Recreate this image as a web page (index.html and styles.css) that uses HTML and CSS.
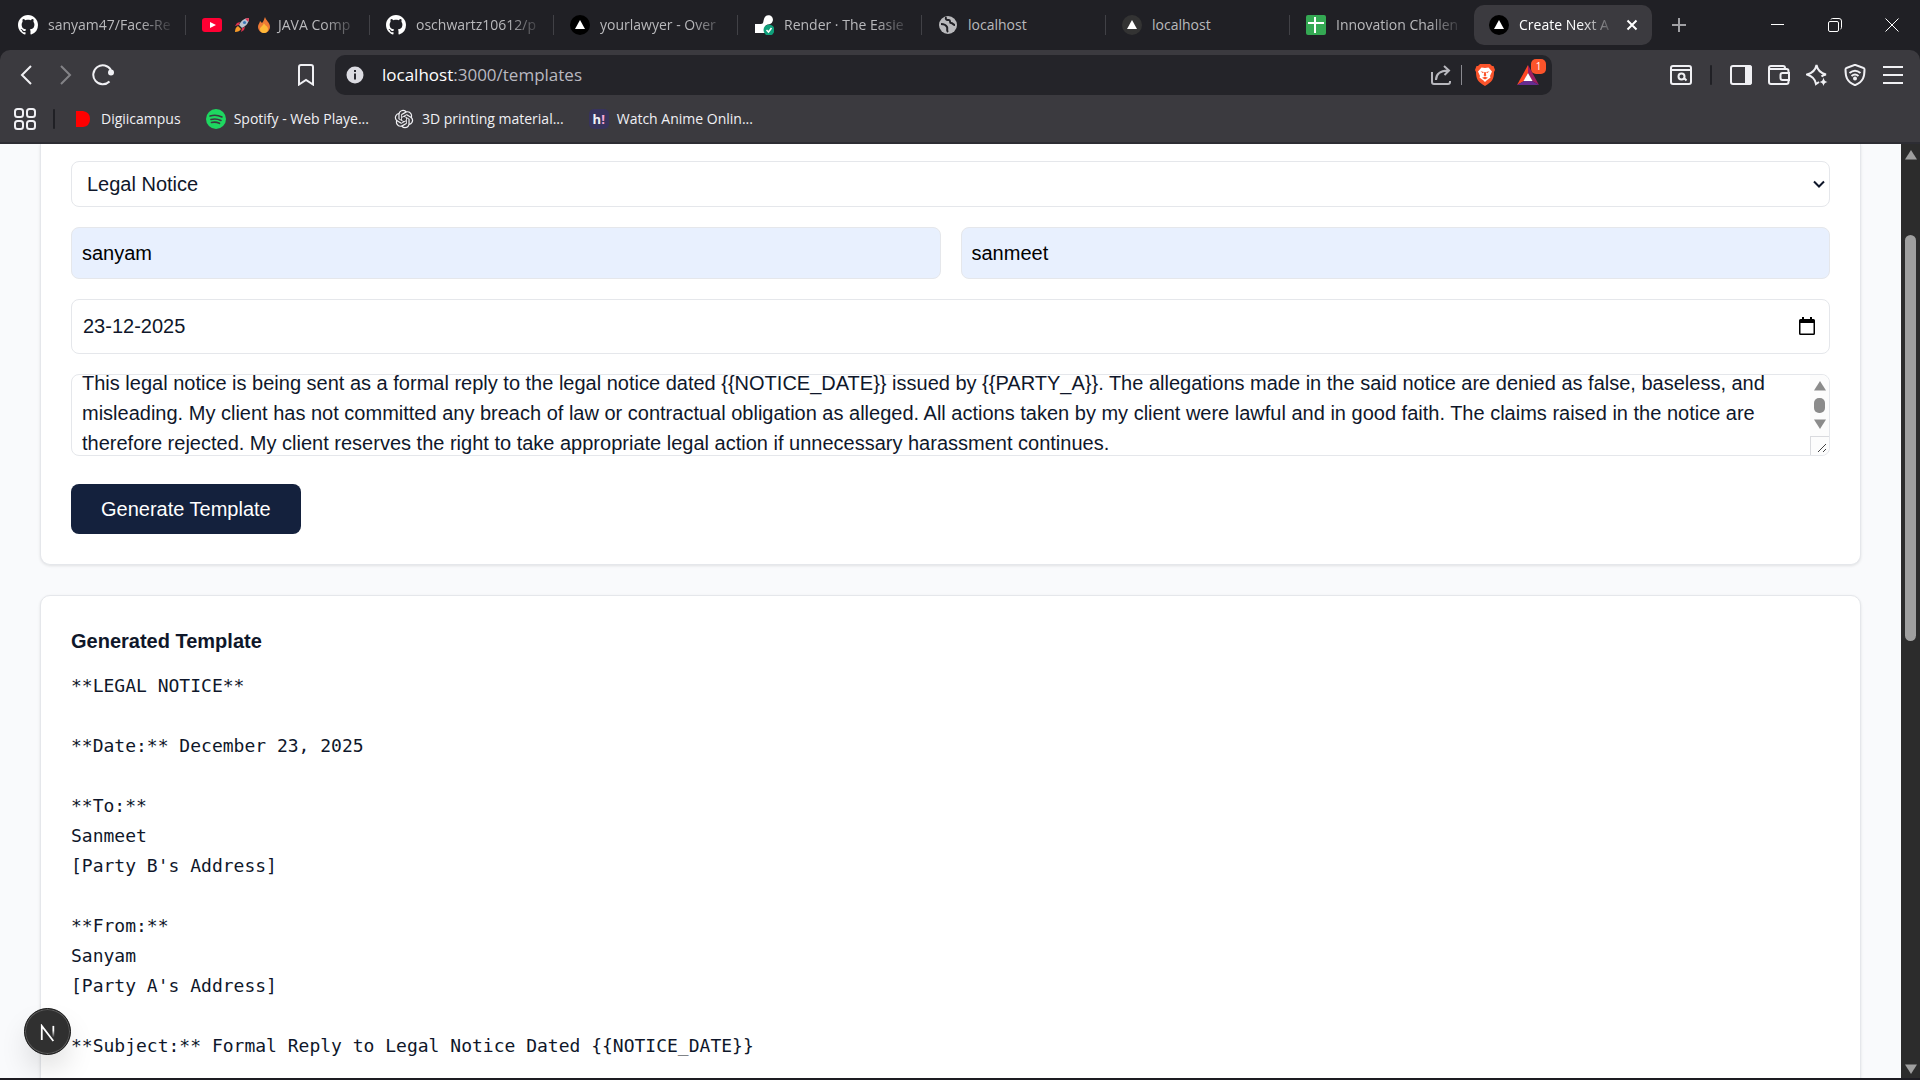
FILE: index.html
```html
<!DOCTYPE html>
<html lang="en">
<head>
<meta charset="utf-8">
<meta name="viewport" content="width=device-width, initial-scale=1">
<title>Create Next App</title>
<link rel="stylesheet" href="styles.css">
</head>
<body>
<svg class="defs" aria-hidden="true">
  <symbol id="github" viewBox="0 0 16 16"><path fill="#fff" d="M8 0C3.58 0 0 3.58 0 8c0 3.54 2.29 6.53 5.47 7.59.4.07.55-.17.55-.38 0-.19-.01-.82-.01-1.49-2.01.37-2.53-.49-2.69-.94-.09-.23-.48-.94-.82-1.13-.28-.15-.68-.52-.01-.53.63-.01 1.08.58 1.23.82.72 1.21 1.87.87 2.33.66.07-.52.28-.87.51-1.07-1.78-.2-3.64-.89-3.64-3.95 0-.87.31-1.59.82-2.15-.08-.2-.36-1.02.08-2.12 0 0 .67-.21 2.2.82.64-.18 1.32-.27 2-.27s1.36.09 2 .27c1.53-1.04 2.2-.82 2.2-.82.44 1.1.16 1.92.08 2.12.51.56.82 1.27.82 2.15 0 3.07-1.87 3.75-3.65 3.95.29.25.54.73.54 1.48 0 1.07-.01 1.93-.01 2.2 0 .21.15.46.55.38A8.01 8.01 0 0 0 16 8c0-4.42-3.58-8-8-8z"/></symbol>
  <symbol id="vercel" viewBox="0 0 20 20"><circle cx="10" cy="10" r="10"/><path fill="#fff" d="M10 5l5 9H5z"/></symbol>
</svg>
<div class="window">
  <header class="chrome">
    <div class="tabstrip">
      <nav class="tabs" aria-label="Tabs">
        <a class="tab" href="#"><svg class="favicon"><use href="#github"/></svg><span class="tab-title fade">sanyam47/Face-Re</span></a>
        <a class="tab" href="#"><svg class="favicon" viewBox="0 0 20 20"><rect y="3" width="20" height="14" rx="3" fill="#ff0033"/><path fill="#fff" d="M8 7l6 3-6 3z"/></svg><span class="tab-title fade"><svg class="emoji" viewBox="0 0 16 16"><path fill="#b9c3cf" d="M15 1c-5 0-8 3-10 7l3 3c4-2 7-5 7-10z"/><path fill="#e0314f" d="M15 1l-4 .7 3.300 3.300zM6 5L3 6 1 9l4-1zM11 10l-1 3-3 2 1-4z"/><circle cx="10.500" cy="5.500" r="1.600" fill="#3c78b8"/><path fill="#f89b28" d="M4 9c-2 1-3 3-3 6 3 0 5-1 6-3z"/></svg><svg class="emoji" viewBox="0 0 16 16"><path fill="#ee7a35" d="M9 0c1 4 5 5 5 10a6 6 0 0 1-12 0c0-3 2-4 2-6l2 2c2-2 2-4 3-6z"/><path fill="#ffb938" d="M8 6c0 2 4 3 4 6a4 4 0 0 1-8 0c0-2 3-3 4-6z"/></svg>JAVA Comp</span></a>
        <a class="tab" href="#"><svg class="favicon"><use href="#github"/></svg><span class="tab-title fade">oschwartz10612/p</span></a>
        <a class="tab" href="#"><svg class="favicon"><use href="#vercel"/></svg><span class="tab-title fade">yourlawyer - Over</span></a>
        <a class="tab" href="#"><svg class="favicon" viewBox="0 0 20 20"><path fill="#fff" d="M1 9h6c3 0 2-3 3-5a4.500 4.500 0 1 1 6 5c-2 1-4 0-5 3v6H1z"/><circle cx="15" cy="15" r="5.500" fill="#0f9f7a"/><path d="M12.500 15l2 2 3-4" fill="none" stroke="#fff" stroke-width="1.500"/></svg><span class="tab-title fade">Render · The Easie</span></a>
        <a class="tab" href="#"><svg class="favicon" viewBox="0 0 20 20"><circle cx="10" cy="10" r="9" fill="#b9b9bc"/><path d="M3 9c3 0 5 1 6 3s-1 3 1 5M8 2c-1 3 1 3 3 3s0 3 2 3 2 2 4 2" fill="none" stroke="#202025" stroke-width="2"/></svg><span class="tab-title">localhost</span></a>
        <a class="tab" href="#"><svg class="favicon favicon-soft"><use href="#vercel"/></svg><span class="tab-title">localhost</span></a>
        <a class="tab" href="#"><svg class="favicon" viewBox="0 0 20 20"><rect width="20" height="20" rx="2" fill="#34a853"/><path fill="#fff" d="M8 2h2v5h8v2h-8v9H8V9H2V7h6z"/></svg><span class="tab-title fade">Innovation Challen</span></a>
        <a class="tab tab-active" href="#" aria-current="page"><svg class="favicon"><use href="#vercel"/></svg><span class="tab-title fade">Create Next A</span><svg class="tab-close" viewBox="0 0 12 12"><path d="M1.500 1.500l9 9M10.500 1.500l-9 9"/></svg></a>
      </nav>
      <button class="new-tab" aria-label="New tab"><svg viewBox="0 0 14 14"><path d="M7 0v14M0 7h14"/></svg></button>
      <div class="window-controls">
        <button aria-label="Minimize"><svg viewBox="0 0 14 14"><path d="M0 6.500h13"/></svg></button>
        <button aria-label="Restore"><svg viewBox="0 0 14 14"><rect x=".5" y="3.500" width="10" height="10" rx="1.500"/><path d="M3 1.500q.3-1 1.500-1H11q2.500 0 2.500 2.500v6.500q0 1.200-1 1.500"/></svg></button>
        <button aria-label="Close"><svg viewBox="0 0 14 14"><path d="M.5.5l13 13M13.500.5l-13 13"/></svg></button>
      </div>
    </div>

    <div class="toolbar">
      <div class="nav-buttons">
        <button aria-label="Back"><svg viewBox="0 0 22 22"><path d="M15 2l-9 9 9 9"/></svg></button>
        <button class="dim" aria-label="Forward"><svg viewBox="0 0 22 22"><path d="M7 2l9 9-9 9"/></svg></button>
        <button aria-label="Reload"><svg viewBox="0 0 22 22"><path d="M17.500 17.500A9.500 9.500 0 1 1 19 6"/><circle cx="19" cy="8.500" r="2" fill="#f0f0f4"/></svg></button>
        <button class="bookmark-page" aria-label="Bookmark this page"><svg viewBox="0 0 22 22"><path d="M4 20.500V3q0-2 2-2h10q2 0 2 2v17.500L11 16z"/></svg></button>
      </div>
      <div class="address">
        <svg class="info" viewBox="0 0 18 18"><circle cx="9" cy="9" r="8.500" fill="#dcdce2"/><path fill="#2a2a30" d="M8 4h2v2H8zM8 7.500h2v6H8z"/></svg>
        <a class="url" href="#"><span class="host">localhost</span>:3000/templates</a>
        <div class="address-actions">
          <button aria-label="Share"><svg viewBox="0 0 22 22"><path class="muted" d="M2 8v10q0 2 2 2h14q2 0 2-2v-1M6 16q0-9 12-9.500M14 2l5 4.500-4.500 4.500"/></svg></button>
          <span class="address-rule"></span>
          <button aria-label="Brave Shields"><svg viewBox="0 0 20 22"><path fill="#fb542b" stroke="none" d="M5 0h10l2 2h1.500l1.500 4-1 2c0 7-2 10-9 14C3 18 1 15 1 8L0 6l1.500-4H3z"/><path fill="#fff" stroke="none" d="M6.500 3.500L10 4l3.500-.5L17 7.500l-2 4.500.5 1.500-4 3L10 18l-1.500-1.500-4-3L5 12 3 7.500z"/><path fill="#fb542b" stroke="none" d="M5.500 7.300l3.300.7-.8 1.300zM14.500 7.300l-3.300.7.8 1.300zM9.300 8h1.400l.6 3.500L10 12.500l-1.300-1zM7 13.800l3-1 3 1-3 1.700z"/></svg></button>
          <button class="rewards" aria-label="Brave Rewards"><svg viewBox="0 0 22 20"><path fill="#ff4724" stroke="none" d="M11 0L0 20l7-4 4-8z"/><path fill="#9e1f63" stroke="none" d="M11 0l11 20-7-4-4-8z"/><path fill="#662d91" stroke="none" d="M0 20h22l-7-4H7z"/><path fill="#fff" stroke="none" d="M11 8l4.500 8h-9z"/></svg><span class="rewards-count">1</span></button>
        </div>
      </div>
      <div class="tools">
        <button aria-label="Search page"><svg viewBox="0 0 22 22"><rect x="1" y="2" width="20" height="18" rx="2"/><path d="M1 6h20M14 14l2.500 2.500"/><circle cx="11.500" cy="12.500" r="3"/></svg></button>
        <span class="rule"></span>
        <button aria-label="Sidebar"><svg viewBox="0 0 22 22"><rect x="1" y="2" width="20" height="18" rx="2"/><path fill="#f0f0f4" d="M16 2h3q2 0 2 2v14q0 2-2 2h-3z"/></svg></button>
        <button aria-label="Wallet"><svg viewBox="0 0 22 22"><path d="M20.500 9V7q0-2-2-2H1.500M17 5V4q0-2-2-2H3Q1 2 1 4v14q0 2 2 2h15.500q2 0 2-2v-2M21 9h-6.500q-2 0-2 2v3q0 2 2 2H21z"/></svg></button>
        <button aria-label="Leo AI"><svg viewBox="0 0 22 22"><path d="M13 18l-3 2q-1-7-9-9.500Q9 8.500 10.500 1 12 8.500 20 10.500q-3 .5-4.500 2"/><path fill="#f0f0f4" stroke="none" d="M17.500 13.500q.7 4 4 4.500-3.300.5-4 4-.7-3.500-4-4 3.300-.5 4-4.500z"/></svg></button>
        <button aria-label="VPN"><svg viewBox="0 0 22 22"><path d="M11 0.800l8.500 3.200q1 0 1 1.500c0 7-1 12-9.500 15.700C2.500 17.500 1.500 12.500 1.500 5.500q0-1.500 1-1.500z"/><path d="M5.500 9q5.500-4.500 11 0M7.500 12q3.500-3 7 0"/><circle cx="11" cy="14.500" r="1" fill="#f0f0f4"/></svg></button>
        <button aria-label="Menu"><svg viewBox="0 0 22 22"><path d="M1 3h20M1 11h20M1 19h20"/></svg></button>
      </div>
    </div>

    <nav class="bookmarks" aria-label="Bookmarks">
      <button class="apps" aria-label="All bookmarks"><svg viewBox="0 0 22 22"><rect x="1" y="1" width="8" height="8" rx="2.500"/><rect x="13" y="1" width="8" height="8" rx="2.500"/><rect x="1" y="13" width="8" height="8" rx="2.500"/><rect x="13" y="13" width="8" height="8" rx="2.500"/></svg></button>
      <span class="rule"></span>
      <a class="bookmark" href="#"><svg class="favicon" viewBox="0 0 20 20"><path fill="#f00" d="M3 2h7q7 1 7 8t-7 8H3z"/></svg>Digiicampus</a>
      <a class="bookmark" href="#"><svg class="favicon" viewBox="0 0 20 20"><circle cx="10" cy="10" r="10" fill="#1ed760"/><path d="M4 7q6-2 12 1M5 10.500q5-1.500 10 1M5.500 13.500q4-1 8 .8" fill="none" stroke="#3b3a3f" stroke-width="1.600" stroke-linecap="round"/></svg>Spotify - Web Playe...</a>
      <a class="bookmark" href="#"><svg class="favicon" viewBox="-1 -1 26 26"><path fill="#f0f0f4" d="M22.280 9.820a5.980 5.980 0 0 0-.52-4.910 6.050 6.050 0 0 0-6.510-2.900A6.070 6.070 0 0 0 4.980 4.180a5.980 5.980 0 0 0-4 2.900 6.050 6.050 0 0 0 .74 7.100 5.980 5.980 0 0 0 .51 4.910 6.050 6.050 0 0 0 6.510 2.900A5.980 5.980 0 0 0 13.260 24a6.060 6.060 0 0 0 5.770-4.210 5.990 5.990 0 0 0 4-2.900 6.060 6.060 0 0 0-.75-7.070zM13.260 22.430a4.480 4.480 0 0 1-2.880-1.040l.14-.08 4.780-2.760a.8.8 0 0 0 .39-.68v-6.740l2.020 1.170a.07.07 0 0 1 .04.05v5.580a4.500 4.500 0 0 1-4.490 4.500zM3.600 18.300a4.470 4.470 0 0 1-.54-3.010l.14.09 4.780 2.760a.77.77 0 0 0 .78 0l5.840-3.370v2.330a.08.08 0 0 1-.03.06L9.740 19.950a4.500 4.500 0 0 1-6.140-1.650zM2.340 7.900a4.490 4.490 0 0 1 2.370-1.970v5.680a.77.77 0 0 0 .39.68l5.810 3.350-2.020 1.170a.08.08 0 0 1-.07 0L4 14.030A4.500 4.500 0 0 1 2.340 7.900zm16.600 3.860L13.100 8.360l2.020-1.160a.08.08 0 0 1 .07 0l4.830 2.790a4.490 4.490 0 0 1-.68 8.100v-5.680a.79.79 0 0 0-.4-.65zm2.010-3.020l-.14-.09-4.780-2.780a.78.78 0 0 0-.78 0L9.410 9.230V6.900a.07.07 0 0 1 .03-.06l4.830-2.790a4.500 4.500 0 0 1 6.680 4.690zM8.310 12.860l-2.020-1.160a.08.08 0 0 1-.04-.06V6.070a4.500 4.500 0 0 1 7.380-3.450l-.14.08L8.700 5.460a.8.8 0 0 0-.39.68zm1.090-2.360l2.600-1.500 2.610 1.500v3l-2.600 1.500-2.610-1.500z"/></svg>3D printing material...</a>
      <a class="bookmark" href="#"><span class="favicon anime">h<span class="anime-mark">!</span></span>Watch Anime Onlin...</a>
    </nav>
  </header>

  <div class="viewport">
    <main class="page">
      <form class="card card-form">
        <div class="select-wrap">
          <select class="field" aria-label="Template type"><option>Legal Notice</option></select>
          <svg class="chevron" viewBox="0 0 12 8"><path d="M1 1.500l5 5 5-5"/></svg>
        </div>
        <div class="parties">
          <input class="field filled" type="text" value="sanyam" aria-label="Party A">
          <input class="field filled" type="text" value="sanmeet" aria-label="Party B">
        </div>
        <div class="field date-field">
          <input class="date-input" type="text" value="23-12-2025" aria-label="Notice date">
          <button type="button" class="date-button" aria-label="Open calendar"><svg viewBox="0 0 16 18"><path d="M0 3.500Q0 2 1.500 2H3V0h2v2h6V0h2v2h1.500Q16 2 16 3.500v13q0 1.500-1.500 1.500h-13Q0 18 0 16.500zM1.500 6v10.500h13V6z"/></svg></button>
        </div>
        <div class="details">
          <textarea class="field details-text" id="details" aria-label="Details">This legal notice is being sent as a formal reply to the legal notice dated {{NOTICE_DATE}} issued by {{PARTY_A}}. The allegations made in the said notice are denied as false, baseless, and misleading. My client has not committed any breach of law or contractual obligation as alleged. All actions taken by my client were lawful and in good faith. The claims raised in the notice are therefore rejected. My client reserves the right to take appropriate legal action if unnecessary harassment continues.</textarea>
          <div class="details-scroll" aria-hidden="true">
            <svg class="arrow" viewBox="0 0 12 10"><path d="M6 0l6 9.500H0z"/></svg>
            <span class="details-thumb"></span>
            <svg class="arrow" viewBox="0 0 12 10"><path d="M0 .5h12L6 10z"/></svg>
            <span class="grip"><svg viewBox="0 0 10 10"><path d="M1 9l8-8M6 9l3-3"/></svg></span>
          </div>
        </div>
        <button type="button" class="generate">Generate Template</button>
      </form>

      <section class="card">
        <h2 class="card-title">Generated Template</h2>
        <pre class="output">**LEGAL NOTICE**

**Date:** December 23, 2025

**To:**
Sanmeet
[Party B's Address]

**From:**
Sanyam
[Party A's Address]

**Subject:** Formal Reply to Legal Notice Dated {{NOTICE_DATE}}

</pre>
      </section>
    </main>
    <div class="scrollbar" aria-hidden="true">
      <svg class="arrow" viewBox="0 0 12 10"><path d="M6 0l6 9.500H0z"/></svg>
      <div class="track"><span class="thumb"></span></div>
      <svg class="arrow" viewBox="0 0 12 10"><path d="M0 .5h12L6 10z"/></svg>
    </div>
    <button class="dev-badge" aria-label="Open Next.js Dev Tools"><svg viewBox="0 0 18 20"><defs><linearGradient id="fade" x1="0" y1="0" x2="0" y2="1"><stop offset=".4" stop-color="#fff"/><stop offset="1" stop-color="#fff" stop-opacity="0"/></linearGradient></defs><path d="M2 18V2l13 17" fill="none" stroke="#fff" stroke-width="2"/><path fill="url(#fade)" d="M14 2h2v13h-2z"/></svg></button>
  </div>
</div>
<script>
  document.getElementById("details").scrollTop = 17;
</script>
</body>
</html>
```
FILE: styles.css
```css
* {
  box-sizing: border-box;
}

body {
  margin: 0;
  color: #0f172a;
  font-family: "Liberation Sans", Arial, sans-serif;
  font-size: 20px;
  line-height: 30px;
}

a {
  color: inherit;
  text-decoration: none;
}

button {
  padding: 0;
  border: 0;
  background: none;
  color: inherit;
  font: inherit;
}

svg {
  display: block;
  flex: none;
}

.defs {
  position: absolute;
  width: 0;
  height: 0;
}

.window {
  display: flex;
  flex-direction: column;
  height: 100vh;
  border-bottom: 2px solid #1d1c22;
  overflow: hidden;
}

/* Browser chrome */

.chrome {
  flex: none;
  background: #202025;
  color: #f0f0f4;
  font-family: "Open Sans", "Noto Sans", sans-serif;
  font-size: 14px;
  line-height: 20px;
}

.tabstrip {
  display: flex;
  align-items: center;
  height: 50px;
  padding-left: 2px;
}

.tabs {
  display: flex;
  align-items: center;
  min-width: 0;
}

.tab {
  display: flex;
  align-items: center;
  gap: 10px;
  width: 184px;
  height: 20px;
  padding: 0 9px 0 16px;
  border-right: 1px solid #414146;
  color: #b9b9bc;
}

.tab:nth-last-child(2) {
  border-color: transparent;
}

.tab-active {
  width: 178px;
  height: 40px;
  padding: 0 14px 0 15px;
  border: 0;
  border-radius: 10px;
  background: #3b3a3f;
  color: #fff;
}

.favicon {
  flex: none;
  width: 20px;
  height: 20px;
}

.favicon-soft {
  fill: #333;
}

.tab-title {
  display: flex;
  flex: 1;
  align-items: center;
  white-space: nowrap;
}

.fade {
  mask-image: linear-gradient(to right, #000 calc(100% - 36px), transparent);
}

.emoji {
  width: 16px;
  height: 16px;
  margin-right: 6px;
}

.tab-title:has(.emoji) {
  padding-left: 2px;
}

.tab-close {
  width: 12px;
  height: 12px;
  stroke: #fff;
  stroke-width: 2;
}

.new-tab {
  width: 54px;
  height: 40px;
}

.new-tab svg {
  width: 14px;
  height: 14px;
  margin: auto;
  stroke: #a0a0a4;
  stroke-width: 2;
}

.window-controls {
  display: flex;
  margin-left: auto;
}

.window-controls button {
  width: 57px;
  height: 50px;
}

.window-controls svg {
  width: 14px;
  height: 14px;
  margin: auto;
  fill: none;
  stroke: #fff;
}

.toolbar {
  display: flex;
  align-items: center;
  height: 50px;
  border-radius: 10px 10px 0 0;
  background: #3b3a3f;
}

.toolbar button {
  width: 38px;
  height: 38px;
}

.toolbar button svg,
.apps svg {
  width: 22px;
  height: 22px;
  margin: auto;
  fill: none;
  stroke: #f0f0f4;
  stroke-width: 2;
}

.toolbar .muted {
  stroke: #b8b8be;
}

.nav-buttons {
  display: flex;
  width: 335px;
  padding: 0 10px 0 8px;
}

.nav-buttons .dim {
  opacity: 0.4;
}

.nav-buttons .bookmark-page {
  margin-left: auto;
}

.address {
  display: flex;
  flex: 1;
  align-items: center;
  height: 40px;
  padding: 0 5px 0 11px;
  border-radius: 10px;
  background: #242429;
  font-size: 17px;
}

.info {
  width: 18px;
  height: 18px;
  margin-right: 18px;
}

.url {
  color: #b9b9c0;
}

.host {
  color: #fff;
}

.address-actions {
  display: flex;
  align-items: center;
  margin-left: auto;
}

.address-rule {
  width: 1px;
  height: 20px;
  margin: 0 4px 0 1px;
  background: #8a8a90;
}

.rewards {
  position: relative;
  margin-left: 5px;
}

.rewards-count {
  position: absolute;
  top: 3px;
  right: 1px;
  width: 15px;
  height: 15px;
  border-radius: 5px;
  background: #fb542b;
  color: #fff;
  font-size: 10px;
  line-height: 15px;
}

.tools {
  display: flex;
  align-items: center;
  padding: 0 8px 0 110px;
}

.rule {
  width: 2px;
  height: 20px;
  margin: 0 10px;
  border-radius: 1px;
  background: #202025;
}

.bookmarks {
  display: flex;
  align-items: center;
  height: 44px;
  padding: 0 15px 4px 14px;
  border-bottom: 2px solid #2d2d33;
  background: #3b3a3f;
}

.bookmarks .rule {
  margin: 0 18px 0 17px;
}

.bookmark {
  display: flex;
  align-items: center;
  gap: 8px;
  margin-right: 25px;
  white-space: nowrap;
}

.anime {
  border-radius: 5px;
  background: #37335c;
  font-size: 13px;
  font-weight: 700;
  text-align: center;
}

.anime-mark {
  color: #f7a8d8;
}

/* Page */

.viewport {
  position: relative;
  display: flex;
  flex: 1;
  min-height: 0;
  background: #f9fafc;
}

.page {
  flex: 1;
  min-width: 0;
  padding: 0 40px;
  overflow: hidden;
}

.card {
  margin-bottom: 30px;
  padding: 30px;
  border: 1px solid #e5e7eb;
  border-radius: 10px;
  background: #fff;
  box-shadow: 0 1px 3px rgba(0, 0, 0, 0.1);
}

.card-form {
  display: flex;
  flex-direction: column;
  gap: 20px;
  padding-top: 17px;
  border-top: 0;
  border-radius: 0 0 10px 10px;
}

.field {
  display: block;
  width: 100%;
  margin: 0;
  border: 1px solid #e5e7eb;
  border-radius: 8px;
  outline: 0;
  background: #fff;
  color: #0f172a;
  font: inherit;
}

.select-wrap {
  display: grid;
  align-items: center;
}

.select-wrap > * {
  grid-area: 1 / 1;
}

select.field {
  height: 46px;
  padding: 0 15px;
  appearance: none;
}

.chevron {
  justify-self: end;
  width: 12px;
  height: 8px;
  margin-right: 5px;
  fill: none;
  stroke: #0f172a;
  stroke-width: 2;
  pointer-events: none;
}

.parties {
  display: grid;
  grid-template-columns: 1fr 1fr;
  gap: 20px;
}

.filled {
  height: 52px;
  padding: 0 10px;
  background: #e8f0fe;
  color: #000;
}

.date-field {
  display: flex;
  align-items: center;
  height: 55px;
  padding: 0 14px 2px 11px;
}

.date-input {
  flex: 1;
  min-width: 0;
  padding: 0;
  border: 0;
  outline: 0;
  color: inherit;
  font: inherit;
}

.date-button svg {
  width: 16px;
  height: 18px;
}

.details {
  position: relative;
  margin-bottom: 8px;
}

.details-text {
  height: 82px;
  padding: 10px 30px 10px 10px;
  overflow: hidden;
  resize: none;
}

.details-scroll {
  position: absolute;
  inset: 1px 1px 1px auto;
  display: flex;
  flex-direction: column;
  align-items: center;
  justify-content: space-between;
  width: 19px;
  padding-top: 6px;
  border-radius: 0 8px 8px 0;
  background: #fcfcfc;
  overflow: hidden;
}

.arrow {
  width: 12px;
  height: 10px;
  fill: #8b8b8b;
}

.details-thumb {
  width: 11px;
  height: 15px;
  border-radius: 5px;
  background: #8b8b8b;
}

.grip {
  display: flex;
  align-items: end;
  justify-content: end;
  width: 19px;
  height: 19px;
  padding: 2px;
  border: 1px solid #d9dade;
  border-width: 1px 0 0 1px;
}

.grip svg {
  width: 10px;
  height: 10px;
  stroke: #444;
  stroke-width: 1;
}

.generate {
  align-self: flex-start;
  height: 50px;
  padding: 0 30px;
  border-radius: 8px;
  background: #14213d;
  color: #fff;
}

.card-title {
  margin: 0 0 15px;
  font-size: 20px;
  font-weight: 700;
}

.output {
  margin: 0;
  font-family: "DejaVu Sans Mono", monospace;
  font-size: 18px;
  line-height: 30px;
  white-space: pre-wrap;
}

.scrollbar {
  display: flex;
  flex: none;
  flex-direction: column;
  align-items: center;
  width: 19px;
  padding: 6px 0 4px;
  background: #2c2c2c;
}

.scrollbar .arrow {
  fill: #9f9f9f;
}

.track {
  flex: 1;
  padding-top: 75px;
}

.thumb {
  display: block;
  width: 11px;
  height: 49%;
  border-radius: 6px;
  background: #9f9f9f;
}

.dev-badge {
  position: absolute;
  bottom: 23px;
  left: 24px;
  width: 47px;
  height: 47px;
  border: 1px solid #171717;
  border-radius: 50%;
  background: #303030;
  box-shadow: inset 0 0 0 1px #5a5a5a, 0 16px 32px -8px rgba(0, 0, 0, 0.24);
}

.dev-badge svg {
  width: 16px;
  height: 18px;
  margin: 2px auto 0;
}
```
